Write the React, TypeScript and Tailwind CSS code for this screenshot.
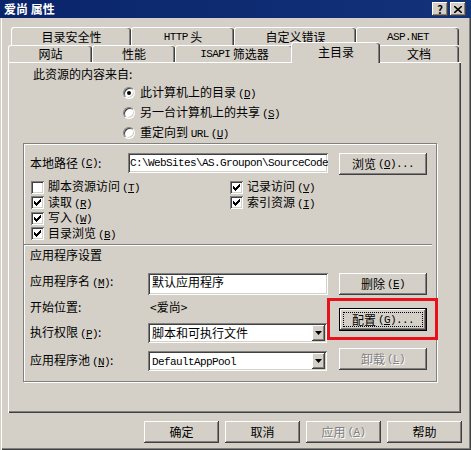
import type { ReactNode } from 'react';

const raised =
  'bg-[#d4d0c8] shadow-[inset_-1px_-1px_#404040,inset_1px_1px_#fff,inset_-2px_-2px_#808080,inset_2px_2px_#d4d0c8]';
const sunken =
  'bg-white shadow-[inset_1px_1px_#808080,inset_-1px_-1px_#fff,inset_2px_2px_#404040,inset_-2px_-2px_#d4d0c8]';
const mono = "font-['Liberation_Mono',monospace] text-[11px] tracking-[-0.6px]";
const disabledText = 'text-[#808080] [text-shadow:1px_1px_#fff]';

// mnemonic like (C)
const K = ({ k }: { k: string }) => (
  <span className={`${mono} ml-[2px]`}>
    (<span className="underline">{k}</span>)
  </span>
);

const L = ({ children }: { children: ReactNode }) => <span className={mono}>{children}</span>;

const Check = ({ on }: { on?: boolean }) => (
  <span className={`${sunken} w-[13px] h-[13px] shrink-0 flex items-center justify-center`}>
    {on && (
      <svg width="9" height="9" viewBox="0 0 9 9">
        <path d="M1 3 L3 5 L8 0 L8 3 L3 8 L1 6 Z" fill="#000" shapeRendering="crispEdges" />
      </svg>
    )}
  </span>
);

const Radio = ({ on }: { on?: boolean }) => (
  <span className="w-[12px] h-[12px] rounded-full bg-white shrink-0 flex items-center justify-center border border-t-[#808080] border-l-[#808080] border-r-white border-b-white shadow-[inset_1px_1px_#404040,inset_-1px_-1px_#d4d0c8]">
    {on && <span className="w-[4px] h-[4px] rounded-full bg-black" />}
  </span>
);

const Btn = ({ children, className = '' }: { children: ReactNode; className?: string }) => (
  <div className={`${raised} flex items-center justify-center ${className}`}>{children}</div>
);

const Select = ({ children }: { children: ReactNode }) => (
  <div className={`${sunken} w-[179px] h-[20px] flex items-center pl-[4px] pr-[2px]`}>
    <span className="flex-1 whitespace-nowrap">{children}</span>
    <span className={`${raised} w-[13px] h-[16px] flex items-center justify-center`}>
      <svg width="7" height="4" viewBox="0 0 7 4">
        <path d="M0 0 H7 L3.5 4 Z" fill="#000" />
      </svg>
    </span>
  </div>
);

const tabBase =
  'flex items-center justify-center border-l border-t border-white rounded-t-[3px] shadow-[inset_-1px_0_#404040,inset_-2px_0_#808080] whitespace-nowrap';

export default function App() {
  return (
    <div className="w-[471px] h-[450px] bg-[#d4d0c8] flex flex-col overflow-hidden text-[12px] leading-[14px] text-black font-['Noto_Sans_CJK_SC',sans-serif]">
      {/* Title bar */}
      <div className="h-[18px] shrink-0 bg-linear-to-r from-[#0a246a] to-[#12327a] flex items-center pl-[4px] pr-[5px]">
        <span className="text-white font-bold flex-1">爱尚 属性</span>
        <div className={`${raised} w-[16px] h-[14px] flex items-center justify-center font-bold text-[11px] leading-none`}>?</div>
        <div className={`${raised} w-[16px] h-[14px] ml-[2px] flex items-center justify-center`}>
          <svg width="8" height="7" viewBox="0 0 8 7">
            <path d="M0 0 L8 7 M8 0 L0 7" stroke="#000" strokeWidth="1.6" />
          </svg>
        </div>
      </div>

      <div className="flex-1 flex flex-col shadow-[inset_1px_0_#d4d0c8,inset_2px_0_#fff,inset_-1px_-1px_#404040,inset_-2px_-2px_#808080]">
        {/* Tabs row 1 */}
        <div className="flex h-[18px] mt-[9px] pl-[11px]">
          <div className={`${tabBase} w-[120px]`}>目录安全性</div>
          <div className={`${tabBase} w-[103px]`}>
            <L>HTTP</L>&nbsp;头
          </div>
          <div className={`${tabBase} w-[122px]`}>自定义错误</div>
          <div className={`${tabBase} w-[103px]`}>
            <L>ASP.NET</L>
          </div>
        </div>
        {/* Tabs row 2 */}
        <div className="flex items-end h-[17px] pl-[8px]">
          <div className={`${tabBase} h-[17px] w-[84px]`}>网站</div>
          <div className={`${tabBase} h-[17px] w-[83px]`}>性能</div>
          <div className={`${tabBase} h-[17px] w-[118px]`}>
            <L>ISAPI</L>&nbsp;筛选器
          </div>
          <div className={`${tabBase} relative z-10 h-[21px] w-[89px] -mx-[2px] -mb-[1px] pb-[2px] bg-[#d4d0c8]`}>主目录</div>
          <div className={`${tabBase} h-[17px] w-[81px]`}>文档</div>
        </div>

        {/* Panel */}
        <div className="ml-[8px] w-[453px] h-[351px] border-t border-l border-white shadow-[inset_-1px_-1px_#404040,inset_-2px_-2px_#808080] flex flex-col">
          <div className="mt-[4px] pl-[24px] h-[14px]">此资源的内容来自:</div>
          <div className="mt-[2px] pl-[114px] flex flex-col">
            <div className="h-[20px] flex items-center gap-[5px]">
              <Radio on />
              <span>
                此计算机上的目录<K k="D" />
              </span>
            </div>
            <div className="h-[20px] flex items-center gap-[5px]">
              <Radio />
              <span>
                另一台计算机上的共享<K k="S" />
              </span>
            </div>
            <div className="h-[20px] flex items-center gap-[5px]">
              <Radio />
              <span>
                重定向到 <L>URL</L>
                <K k="U" />
              </span>
            </div>
          </div>

          {/* Group box */}
          <div className="relative ml-[14px] w-[414px] h-[239px] border border-[#808080] shadow-[inset_1px_1px_#fff,1px_1px_#fff] flex flex-col">
            <div className="mt-[9px] pl-[6px] flex items-start">
              <div className="w-[98px] h-[20px] flex items-center">
                本地路径<K k="C" />:
              </div>
              <div className={`${sunken} w-[200px] h-[20px] flex items-center pl-[2px] pr-[2px] overflow-hidden`}>
                <span className={`${mono} whitespace-nowrap`}>C:\WebSites\AS.Groupon\SourceCode</span>
              </div>
              <Btn className="ml-[11px] w-[88px] h-[22px]">
                浏览<K k="O" />
                <L>...</L>
              </Btn>
            </div>

            <div className="mt-[4px] pl-[7px] grid grid-cols-[199px_1fr]">
              <div className="h-[16px] flex items-center gap-[4px]">
                <Check />
                <span>
                  脚本资源访问<K k="T" />
                </span>
              </div>
              <div className="h-[16px] flex items-center gap-[4px]">
                <Check on />
                <span>
                  记录访问<K k="V" />
                </span>
              </div>
              <div className="h-[15px] flex items-center gap-[4px]">
                <Check on />
                <span>
                  读取<K k="R" />
                </span>
              </div>
              <div className="h-[15px] flex items-center gap-[4px]">
                <Check on />
                <span>
                  索引资源<K k="I" />
                </span>
              </div>
              <div className="h-[16px] flex items-center gap-[4px]">
                <Check on />
                <span>
                  写入<K k="W" />
                </span>
              </div>
              <div className="h-[16px]" />
              <div className="h-[15px] flex items-center gap-[4px]">
                <Check on />
                <span>
                  目录浏览<K k="B" />
                </span>
              </div>
            </div>

            <div className="mt-[3px] w-[408px] h-[2px] border-t border-[#808080] border-b border-b-white" />

            <div className="flex">
              <div className="pl-[6px] w-[304px] flex flex-col">
                <div className="mt-[2px] h-[14px]">应用程序设置</div>
                <div className="mt-[11px] flex items-start">
                  <div className="w-[118px] h-[14px] mt-[1px]">
                    应用程序名<K k="M" />:
                  </div>
                  <div className={`${sunken} w-[180px] h-[22px] pl-[4px] pt-[2px]`}>默认应用程序</div>
                </div>
                <div className="mt-[5px] h-[14px] flex">
                  <div className="w-[120px]">开始位置:</div>
                  <div>&lt;爱尚&gt;</div>
                </div>
                <div className="mt-[9px] flex items-center">
                  <div className="w-[118px]">
                    执行权限<K k="P" />:
                  </div>
                  <Select>脚本和可执行文件</Select>
                </div>
                <div className="mt-[8px] flex items-center">
                  <div className="w-[118px]">
                    应用程序池<K k="N" />:
                  </div>
                  <Select>
                    <L>DefaultAppPool</L>
                  </Select>
                </div>
              </div>
              <div className="ml-[11px] flex flex-col">
                <Btn className="mt-[27px] w-[88px] h-[22px]">
                  删除<K k="E" />
                </Btn>
                <div className="mt-[13px] w-[88px] h-[23px] border border-black">
                  <Btn className="w-full h-full p-[3px]">
                    <span className="w-full h-full flex items-center justify-center border border-dotted border-black">
                      配置<K k="G" />
                      <L>...</L>
                    </span>
                  </Btn>
                </div>
                <Btn className={`mt-[17px] w-[88px] h-[22px] ${disabledText}`}>
                  卸载<K k="L" />
                </Btn>
              </div>
            </div>

            {/* annotation highlight */}
            <div className="absolute left-[303px] top-[154px] w-[111px] h-[42px] border-[3px] border-[#e8101a]" />
          </div>
        </div>

        {/* Bottom buttons */}
        <div className="mt-[8px] pl-[144px] flex gap-[6px]">
          <Btn className="w-[75px] h-[22px]">确定</Btn>
          <Btn className="w-[75px] h-[22px]">取消</Btn>
          <Btn className={`w-[75px] h-[22px] ${disabledText}`}>
            应用<K k="A" />
          </Btn>
          <Btn className="w-[75px] h-[22px]">帮助</Btn>
        </div>
      </div>
    </div>
  );
}
